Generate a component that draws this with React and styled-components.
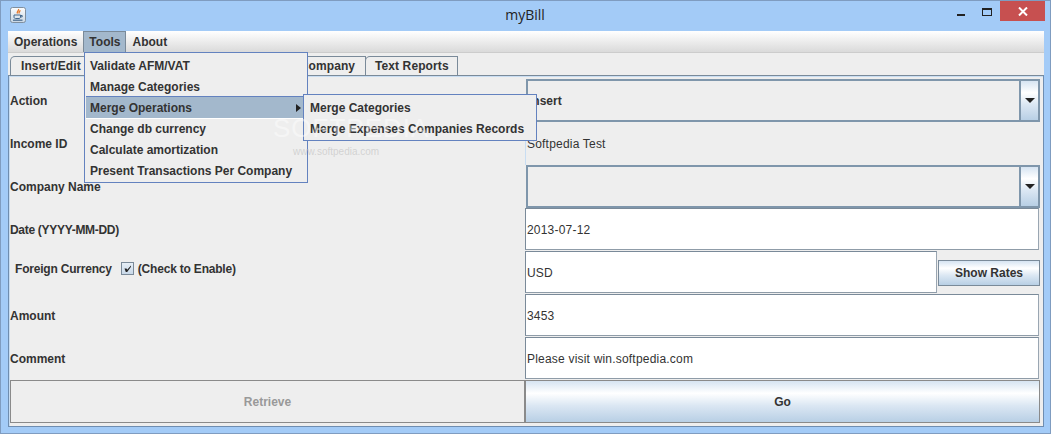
import React from 'react';
import styled, { createGlobalStyle } from 'styled-components';

const Global = createGlobalStyle`
  html, body { margin: 0; padding: 0; background: #a3cbf7; }
  * { box-sizing: border-box; }
  body { font-family: "Liberation Sans", Arial, sans-serif; font-size: 12px; color: #333; }
`;

const oceanGradient = 'linear-gradient(#d6e4f2, #fff 30%, #dbe7f3 60%, #b8cfe5)';

const Window = styled.div`
  position: relative;
  width: 1051px;
  height: 434px;
  background: #a3cbf7;
  border: 1px solid #7f9cc0;
  padding: 0 6px 6px 7px;
  display: flex;
  flex-direction: column;
  overflow: hidden;
`;

const TitleBar = styled.div`
  height: 30px;
  flex: none;
  display: flex;
  align-items: flex-start;
  position: relative;
`;

const AppIcon = styled.svg`
  margin: 6px 0 0 2px;
  width: 16px;
  height: 16px;
`;

const Title = styled.div`
  position: absolute;
  left: 0;
  right: 2px;
  top: 4px;
  text-align: center;
  font-family: "Open Sans", sans-serif;
  font-size: 14px;
  line-height: 20px;
  color: #222;
`;

const WinControls = styled.div`
  position: absolute;
  right: -1px;
  top: 0;
  display: flex;
  align-items: flex-start;
`;

const WinBtn = styled.div`
  width: ${(p) => p.$w}px;
  height: 20px;
  display: flex;
  align-items: center;
  justify-content: center;
  background: ${(p) => p.$bg || 'transparent'};
`;

const MinGlyph = styled.div`
  width: 8px;
  height: 2px;
  margin-top: 7px;
  background: #222;
`;

const MaxGlyph = styled.div`
  width: 10px;
  height: 8px;
  margin-top: 2px;
  border: 1px solid #222;
  border-top-width: 2px;
`;

const Client = styled.div`
  flex: 1;
  background: #eee;
  display: flex;
  flex-direction: column;
  min-height: 0;
`;

const MenuBar = styled.div`
  height: 22px;
  flex: none;
  display: flex;
  background: linear-gradient(#fff, #dadada);
  border-bottom: 1px solid #ccc;
`;

const MenuTitle = styled.div`
  height: 21px;
  padding: 0 5px;
  display: flex;
  align-items: center;
  font-weight: bold;
  border: 1px solid ${(p) => (p.$open ? '#7a8a99' : 'transparent')};
  border-bottom: 0;
  background: ${(p) => (p.$open ? '#a3b8cc' : 'transparent')};
`;

const TabRow = styled.div`
  height: 22px;
  flex: none;
  display: flex;
  align-items: flex-end;
  padding-left: 2px;
`;

const Tab = styled.div`
  width: ${(p) => p.$w}px;
  height: 19px;
  padding-left: ${(p) => p.$pad}px;
  margin-right: -1px;
  display: flex;
  align-items: center;
  white-space: nowrap;
  overflow: hidden;
  font-weight: bold;
  letter-spacing: 0.1px;
  border: 1px solid #7a8a99;
  border-bottom: 0;
  border-top-left-radius: 5px;
  background: #eee;
`;

const TabPanel = styled.div`
  flex: 1;
  min-height: 0;
  border: 1px solid #6f8db0;
  border-top: 1px solid #7a8a99;
  box-shadow: inset 1px 1px 0 #c8ddf2;
  padding: 3px 2px 3px 1px;
  display: grid;
  grid-template-columns: 515px 515px;
  grid-template-rows: repeat(8, 43px);
`;

const Label = styled.div`
  display: flex;
  align-items: center;
  font-weight: bold;
  white-space: nowrap;
  padding-left: ${(p) => p.$indent || 0}px;
  padding-bottom: ${(p) => p.$raise || 0}px;
  letter-spacing: ${(p) => p.$track || 0}px;
`;

const CheckBox = styled.span`
  width: 13px;
  height: 13px;
  margin: 0 4px 0 9px;
  border: 1px solid #7a8a99;
  background: linear-gradient(#e6eef6, #c8d8e8);
  display: inline-flex;
  align-items: center;
  justify-content: center;
`;

const Combo = styled.div`
  display: flex;
  border: 2px solid #7f96ab;
  margin-left: 1px;
  background: #eee;
  align-items: stretch;
`;

const ComboValue = styled.div`
  flex: 1;
  padding-left: 1px;
  display: flex;
  align-items: center;
  font-weight: bold;
  border-right: 2px solid #7f96ab;
`;

const ComboArrow = styled.div`
  width: 17px;
  background: ${oceanGradient};
  display: flex;
  align-items: center;
  justify-content: center;
  &::after {
    content: '';
    border-left: 5px solid transparent;
    border-right: 5px solid transparent;
    border-top: 5px solid #222;
  }
`;

const Plain = styled.div`
  display: flex;
  align-items: center;
  padding-left: 1px;
  letter-spacing: 0.2px;
  border-left: 1px solid #c8ddf2;
`;

const Field = styled.div`
  display: flex;
  align-items: center;
  padding: 1px 0 0 1px;
  letter-spacing: 0.2px;
  background: #fff;
  border: 1px solid #7a8a99;
  border-right-color: #9aa6b2;
  border-bottom-color: #8f9ca8;
  margin: 0 1px 1px 0;
  flex: ${(p) => (p.$grow ? 1 : 'none')};
`;

const FieldRow = styled.div`
  display: flex;
  align-items: center;
  & > ${Field} {
    height: 42px;
    margin: 0 1px 1px 0;
  }
`;

const SmallButton = styled.div`
  width: 102px;
  height: 26px;
  display: flex;
  align-items: center;
  justify-content: center;
  font-weight: bold;
  border: 1px solid #7a8a99;
  background: ${oceanGradient};
`;

const ActionButton = styled.div`
  display: flex;
  align-items: center;
  justify-content: center;
  font-weight: bold;
  border: 1px solid #8a8a8a;
  color: ${(p) => (p.$disabled ? '#999' : '#333')};
  background: ${(p) => (p.$disabled ? '#eee' : oceanGradient)};
`;

const Popup = styled.div`
  position: absolute;
  left: ${(p) => p.$x}px;
  top: ${(p) => p.$y}px;
  width: ${(p) => p.$w}px;
  padding: 2px 1px 1px;
  background: #eee;
  border: 1px solid #6382bf;
  z-index: ${(p) => p.$z};
`;

const PopupItem = styled.div`
  height: 21px;
  padding-left: ${(p) => p.$pad}px;
  display: flex;
  align-items: center;
  justify-content: space-between;
  font-weight: bold;
  background: ${(p) => (p.$active ? '#a3b8cc' : 'transparent')};
  box-shadow: ${(p) => (p.$active ? '0 -1px 0 #6382bf, 0 1px 0 #fff' : 'none')};
`;

const SubArrow = styled.span`
  margin-right: 5px;
  border-top: 4px solid transparent;
  border-bottom: 4px solid transparent;
  border-left: 5px solid #222;
`;

const Watermark = styled.div`
  position: absolute;
  z-index: 4;
  pointer-events: none;
  left: ${(p) => p.$x}px;
  top: ${(p) => p.$y}px;
  color: ${(p) => p.$color};
  font-size: ${(p) => p.$size}px;
  letter-spacing: ${(p) => p.$track}px;
  white-space: nowrap;
`;

const mainItems = [
  'Validate AFM/VAT',
  'Manage Categories',
  'Merge Operations',
  'Change db currency',
  'Calculate amortization',
  'Present Transactions Per Company',
];

export default function App() {
  return (
    <>
      <Global />
      <Window>
        <TitleBar>
          <AppIcon viewBox="0 0 16 16">
            <defs>
              <linearGradient id="iconBg" x1="0" y1="0" x2="0" y2="1">
                <stop offset="0" stopColor="#fbfcfd" />
                <stop offset="1" stopColor="#c9d6e3" />
              </linearGradient>
            </defs>
            <rect x="0.5" y="0.5" width="15" height="15" rx="2" fill="url(#iconBg)" stroke="#7f8f9f" />
            <path d="M8.500 2c1 1.500-2.500 2.500-1 4.500M10.500 3.500c-1.500.8-2 1.500-1.200 3" stroke="#e8792a" strokeWidth="1.300" fill="none" />
            <path d="M4 8h6.500v2c0 1-.8 1.500-1.500 1.500H5.500C4.700 11.500 4 11 4 10zM10.500 8.500h1.700v1.400h-1.700" fill="none" stroke="#44688c" />
            <path d="M3 13.200h9.500" stroke="#44688c" strokeWidth="1.200" />
          </AppIcon>
          <Title>myBill</Title>
          <WinControls>
            <WinBtn $w={26}><MinGlyph /></WinBtn>
            <WinBtn $w={26}><MaxGlyph /></WinBtn>
            <WinBtn $w={45} $bg="#c75050">
              <svg width="10" height="9" viewBox="0 0 10 9">
                <path d="M1 .5l8 8M9 .5l-8 8" stroke="#fff" strokeWidth="2" />
              </svg>
            </WinBtn>
          </WinControls>
        </TitleBar>
        <Client>
          <MenuBar>
            <MenuTitle>Operations</MenuTitle>
            <MenuTitle $open>Tools</MenuTitle>
            <MenuTitle>About</MenuTitle>
          </MenuBar>
          <TabRow>
            <Tab $w={143} $pad={10}>Insert/Edit Income</Tab>
            <Tab $w={214} $pad={45}>Transactions Per Company</Tab>
            <Tab $w={93} $pad={9}>Text Reports</Tab>
          </TabRow>
          <TabPanel>
            <Label>Action</Label>
            <Combo>
              <ComboValue>Insert</ComboValue>
              <ComboArrow />
            </Combo>
            <Label>Income ID</Label>
            <Plain>Softpedia Test</Plain>
            <Label>Company Name</Label>
            <Combo>
              <ComboValue />
              <ComboArrow />
            </Combo>
            <Label $track={-0.3}>Date (YYYY-MM-DD)</Label>
            <Field>2013-07-12</Field>
            <Label $indent={5} $track={-0.2} $raise={8}>
              Foreign Currency
              <CheckBox>
                <svg width="11" height="11" viewBox="0 0 11 11">
                  <path d="M2.500 5.500h2l.7 1.300L9 2.500v1.200L5.200 9H3.800z" fill="#222" />
                </svg>
              </CheckBox>
              (Check to Enable)
            </Label>
            <FieldRow>
              <Field $grow>USD</Field>
              <SmallButton>Show Rates</SmallButton>
            </FieldRow>
            <Label>Amount</Label>
            <Field>3453</Field>
            <Label>Comment</Label>
            <Field>Please visit win.softpedia.com</Field>
            <ActionButton $disabled>Retrieve</ActionButton>
            <ActionButton>Go</ActionButton>
          </TabPanel>
        </Client>
        <Popup $x={83} $y={51} $w={224} $z={2}>
          {mainItems.map((item) => (
            <PopupItem key={item} $pad={4} $active={item === 'Merge Operations'}>
              {item}
              {item === 'Merge Operations' && <SubArrow />}
            </PopupItem>
          ))}
        </Popup>
        <Popup $x={302} $y={93} $w={234} $z={3}>
          <PopupItem $pad={5}>Merge Categories</PopupItem>
          <PopupItem $pad={5}>Merge Expenses Companies Records</PopupItem>
        </Popup>
        <Watermark $x={272} $y={112} $color="rgba(255,255,255,0.45)" $size={26} $track={1}>SOFTPEDIA</Watermark>
        <Watermark $x={292} $y={145} $color="rgba(190,190,190,0.6)" $size={10} $track={0}>www.softpedia.com</Watermark>
      </Window>
    </>
  );
}
